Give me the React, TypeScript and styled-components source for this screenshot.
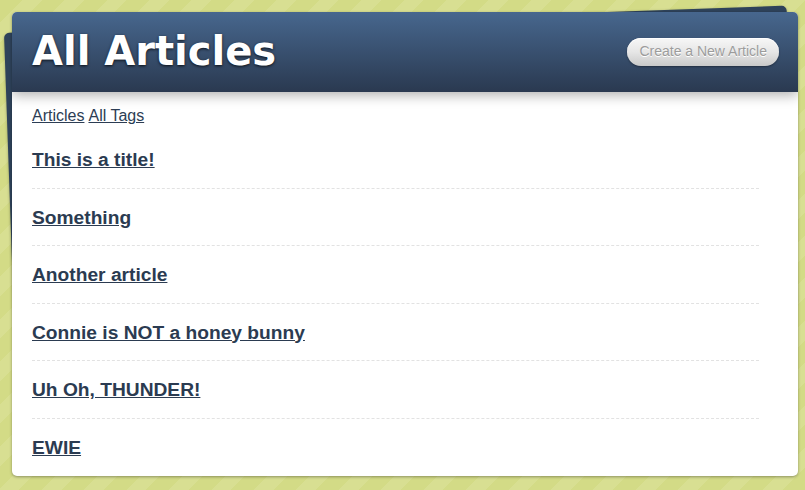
import React from "react";
import styled, { createGlobalStyle } from "styled-components";

const GlobalStyle = createGlobalStyle`
  html, body {
    margin: 0;
    padding: 0;
  }
  body {
    min-height: 490px;
    font-family: "Liberation Sans", Arial, sans-serif;
    background-color: #d3db86;
    background-image: repeating-linear-gradient(
      -45deg,
      #d3db86 0px,
      #d3db86 16px,
      #d8df92 16px,
      #d8df92 30px
    );
  }
`;

const Stage = styled.div`
  position: relative;
  width: 786px;
  margin: 12px 0 0 12px;
`;

const BackSheet = styled.div`
  position: absolute;
  top: 0;
  left: 0;
  width: 783px;
  height: 300px;
  background: #2e425a;
  border-radius: 5px;
  transform-origin: top left;
  transform: translate(-8px, 21px) rotate(-2deg);
  box-shadow: 0 1px 3px rgba(0, 0, 0, 0.3);
`;

const Card = styled.div`
  position: relative;
  background: #ffffff;
  border-radius: 5px;
  overflow: hidden;
  box-shadow: 0 1px 3px rgba(0, 0, 0, 0.35);
`;

const Header = styled.header`
  position: relative;
  z-index: 1;
  height: 80px;
  display: flex;
  align-items: center;
  justify-content: space-between;
  padding: 0 19px 0 20px;
  background: linear-gradient(to bottom, #47678e 0%, #2a3950 100%);
  box-shadow: 0 3px 12px rgba(0, 0, 0, 0.32);
`;

const Title = styled.h1`
  margin: 0 0 2px;
  font-family: "DejaVu Sans", Verdana, sans-serif;
  font-weight: bold;
  font-size: 40px;
  line-height: 46px;
  color: #ffffff;
  text-shadow: 0 1px 3px rgba(0, 0, 0, 0.8);
`;

const NewButton = styled.a`
  display: inline-block;
  padding: 5px 12px 7px;
  border-radius: 14px;
  font-family: "Liberation Sans", Arial, sans-serif;
  font-size: 14px;
  line-height: 16px;
  color: #9c9c9c;
  text-decoration: none;
  text-shadow: 0 1px 0 #ffffff;
  background: linear-gradient(to bottom, #f7f7f7 0%, #e6e6e6 50%, #c9c9c9 100%);
  box-shadow: 0 1px 2px rgba(0, 0, 0, 0.35), inset 0 1px 0 rgba(255, 255, 255, 0.9);
`;

const Content = styled.main`
  padding: 15px 39px 1px 20px;
`;

const Nav = styled.nav`
  display: flex;
  gap: 4px;
  margin-bottom: 6px;
  font-size: 16px;
  line-height: 18px;
`;

const NavLink = styled.a`
  color: #2c3d54;
  text-decoration: underline;
`;

const List = styled.ul`
  list-style: none;
  margin: 0;
  padding: 0;
`;

const Item = styled.li`
  padding: 18px 0 16px;
  border-bottom: 1px dashed #e2e2e2;
  &:last-child {
    border-bottom: none;
  }
`;

const ArticleLink = styled.a`
  font-size: 19.2px;
  line-height: 22.5px;
  font-weight: bold;
  color: #2b3b51;
  text-decoration: underline;
`;

const articles = [
  "This is a title!",
  "Something",
  "Another article",
  "Connie is NOT a honey bunny",
  "Uh Oh, THUNDER!",
  "EWIE",
];

export default function App() {
  return (
    <>
      <GlobalStyle />
      <Stage>
        <BackSheet />
        <Card>
          <Header>
            <Title>All Articles</Title>
            <NewButton href="#">Create a New Article</NewButton>
          </Header>
          <Content>
            <Nav>
              <NavLink href="#">Articles</NavLink>
              <NavLink href="#">All Tags</NavLink>
            </Nav>
            <List>
              {articles.map((a) => (
                <Item key={a}>
                  <ArticleLink href="#">{a}</ArticleLink>
                </Item>
              ))}
            </List>
          </Content>
        </Card>
      </Stage>
    </>
  );
}
